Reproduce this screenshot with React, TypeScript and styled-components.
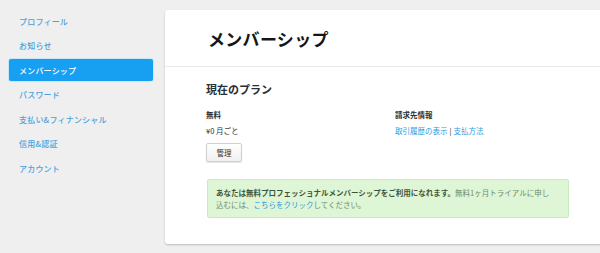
import React from 'react';
import styled, { createGlobalStyle } from 'styled-components';

const GlobalStyle = createGlobalStyle`
    html, body {
        margin: 0;
        padding: 0;
        background: #efefef;
    }
    body {
        font-family: "Noto Sans CJK JP", "Noto Sans", "Liberation Sans", sans-serif;
        color: #292f33;
    }
`

const Page = styled.div`
    display: flex;
    width: 600px;
    height: 253px;
    overflow: hidden;
    background: #efefef;
`
const Sidebar = styled.nav`
    width: 144px;
    flex: none;
    padding: 10px 12px 0 9px;
    display: flex;
    flex-direction: column;
    gap: 2.5px;
`
const NavItem = styled.a<{ $active?: boolean }>`
    display: flex;
    align-items: center;
    height: 22px;
    padding-left: 10px;
    border-radius: 2px;
    font-size: 8px;
    font-weight: 500;
    letter-spacing: 0.2px;
    color: ${props => props.$active ? '#ffffff' : '#4aa3df'};
    background: ${props => props.$active ? '#17a0f2' : 'transparent'};
    box-shadow: ${props => props.$active ? '0 0 0 1px #c9e6f8' : 'none'};
    text-decoration: none;
`
const Card = styled.main`
    flex: none;
    width: 460px;
    height: 234px;
    margin-top: 10px;
    background: #ffffff;
    border-radius: 3px 0 0 3px;
    box-shadow: 0 1px 2px rgba(0, 0, 0, 0.22);
    display: flex;
    flex-direction: column;
`
const Header = styled.header`
    height: 56px;
    display: flex;
    align-items: center;
    padding-left: 43px;
    border-bottom: 1px solid #e6ecf0;
`
const Title = styled.h1`
    margin: 0;
    font-size: 17px;
    font-weight: 700;
    color: #14171a;
    letter-spacing: 0.3px;
`
const Section = styled.section`
    padding: 14px 0 0 41px;
`
const SectionTitle = styled.h2`
    margin: 0 0 12px;
    font-size: 11px;
    font-weight: 700;
    color: #292f33;
`
const Columns = styled.div`
    display: flex;
`
const Column = styled.div<{ $width?: number }>`
    width: ${props => props.$width ? `${props.$width}px` : 'auto'};
    display: flex;
    flex-direction: column;
    align-items: flex-start;
`
const Label = styled.div`
    font-size: 7.5px;
    font-weight: 700;
    color: #292f33;
    line-height: 12px;
`
const Value = styled.div`
    margin-top: 4px;
    font-size: 7.5px;
    color: #292f33;
    line-height: 12px;
    white-space: pre;
`
const Link = styled.a`
    color: #2b9bdf;
    text-decoration: none;
`
const Sep = styled.span`
    color: #292f33;
    margin: 0 2px;
`
const Button = styled.button`
    margin-top: 6px;
    width: 36px;
    height: 19px;
    padding: 0;
    font-family: inherit;
    font-size: 7.5px;
    color: #333;
    background: linear-gradient(#ffffff, #f0f0f0);
    border: 1px solid #cfcfcf;
    border-radius: 2px;
    box-shadow: 0 1px 1px rgba(0, 0, 0, 0.1);
`
const Alert = styled.div`
    margin: 17px 0 0 1px;
    width: 340px;
    padding: 7px 12px 6px 8px;
    background: #def5d6;
    border: 1px solid #c9ebbf;
    border-radius: 2px;
    font-size: 7.5px;
    line-height: 12px;
    color: #6e8b6b;
`
const Strong = styled.strong`
    color: #3d553b;
    font-weight: 700;
`

const navItems = ['プロフィール', 'お知らせ', 'メンバーシップ', 'パスワード', '支払い&フィナンシャル', '信用&認証', 'アカウント']

function App() {
    return (
        <>
            <GlobalStyle />
            <Page>
                <Sidebar>
                    {navItems.map(item => (
                        <NavItem key={item} $active={item === 'メンバーシップ'}>{item}</NavItem>
                    ))}
                </Sidebar>
                <Card>
                    <Header>
                        <Title>メンバーシップ</Title>
                    </Header>
                    <Section>
                        <SectionTitle>現在のプラン</SectionTitle>
                        <Columns>
                            <Column $width={189}>
                                <Label>無料</Label>
                                <Value>¥0 月ごと</Value>
                                <Button>管理</Button>
                            </Column>
                            <Column>
                                <Label>請求先情報</Label>
                                <Value>
                                    <Link>取引履歴の表示</Link><Sep>|</Sep><Link>支払方法</Link>
                                </Value>
                            </Column>
                        </Columns>
                        <Alert>
                            <Strong>あなたは無料プロフェッショナルメンバーシップをご利用になれます。</Strong>
                            無料1ヶ月トライアルに申し込むには、<Link>こちらをクリック</Link>してください。
                        </Alert>
                    </Section>
                </Card>
            </Page>
        </>
    )
}

export default App;
